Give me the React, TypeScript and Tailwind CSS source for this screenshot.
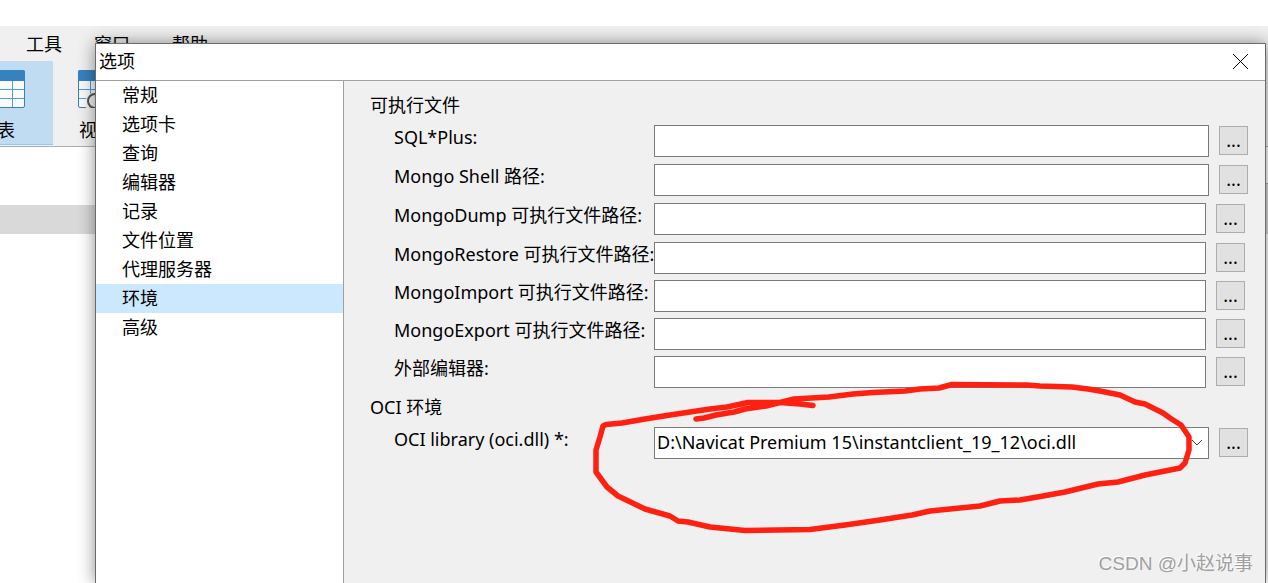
import { useState } from "react";

interface PathField {
  id: string;
  label: string;
  rowClass: string;
}

const categories = [
  "常规",
  "选项卡",
  "查询",
  "编辑器",
  "记录",
  "文件位置",
  "代理服务器",
  "环境",
  "高级",
];

const pathFields: PathField[] = [
  { id: "sqlplus", label: "SQL*Plus:", rowClass: "mb-[7px] pr-[17px]" },
  { id: "mongoShell", label: "Mongo Shell 路径:", rowClass: "mb-[7px] pr-[17px]" },
  { id: "mongoDump", label: "MongoDump 可执行文件路径:", rowClass: "mb-[7px] pr-5" },
  { id: "mongoRestore", label: "MongoRestore 可执行文件路径:", rowClass: "mb-1.5 pr-5" },
  { id: "mongoImport", label: "MongoImport 可执行文件路径:", rowClass: "mb-1.5 pr-5" },
  { id: "mongoExport", label: "MongoExport 可执行文件路径:", rowClass: "mb-1.5 pr-5" },
  { id: "editor", label: "外部编辑器:", rowClass: "pr-5" },
];

const ociPath = "D:\\Navicat Premium 15\\instantclient_19_12\\oci.dll";

const BrowseButton = ({ label }: { label: string }) => (
  <button
    aria-label={label}
    className="ml-2.5 mt-px flex h-[29px] w-[29px] shrink-0 items-center justify-center border border-[#adadad] bg-[#e1e1e1] pb-0.5"
  >
    ...
  </button>
);

const TableIcon = () => (
  <svg width="38" height="38" viewBox="0 0 38 38" fill="none">
    <rect x="0.5" y="0.5" width="37" height="37" rx="1.5" fill="#fafafa" stroke="#3682be" />
    <path d="M0 11V2Q0 0 2 0H36Q38 0 38 2V11Z" fill="#3682be" />
    <path d="M1 19.5H37M1 28.5H37M12.5 11V37M25.5 11V37" stroke="#4a9fe0" />
  </svg>
);

const ViewIcon = () => (
  <svg width="38" height="38" viewBox="0 0 38 38" fill="none">
    <rect x="0.5" y="0.5" width="37" height="37" rx="1.5" fill="#fafafa" stroke="#3682be" />
    <path d="M0 11V2Q0 0 2 0H36Q38 0 38 2V11Z" fill="#3682be" />
    <path d="M1 19.5H37M1 28.5H37M12.5 11V37M25.5 11V37" stroke="#4a9fe0" />
    <path d="M8 39V29Q11 22 18 22H38V39Z" fill="#f0f0f0" />
    <circle cx="17" cy="31" r="7" stroke="#555" strokeWidth="2" />
  </svg>
);

// The Navicat main window that sits behind the dialog
const MainWindow = () => (
  <div className="pt-[26px]">
    <div className="bg-[#f0f0f0]">
      <nav className="flex h-[35px] items-center gap-8 pl-[26px]">
        <button>工具</button>
        <button>窗口</button>
        <button className="ml-2.5">帮助</button>
      </nav>
      <div className="flex h-[86px] border-b border-[#adadad]">
        <button className="flex h-[84px] w-[53px] flex-col items-end border-b border-[#90c8f6] bg-[#c0dcf3] pr-7 pt-[9px]">
          <TableIcon />
          <span className="mr-2.5 mt-2.5">表</span>
        </button>
        <button className="ml-[25px] flex flex-col items-center pt-[9px]">
          <ViewIcon />
          <span className="mt-2.5">视图</span>
        </button>
      </div>
    </div>
    <div className="flex h-[58px] items-end justify-end">
      <div className="h-[22px] w-2 border-t border-[#adadad] bg-[#d9d9d9]" />
    </div>
    <div className="h-[29px] bg-[#d9d9d9]" />
  </div>
);

const App = () => {
  const [selected, setSelected] = useState("环境");

  return (
    <div className="relative min-h-screen overflow-hidden bg-white font-['Noto_Sans','Noto_Sans_CJK_SC',sans-serif] text-[18px] leading-6 text-black">
      <MainWindow />

      {/* Options dialog */}
      <div className="absolute bottom-0 left-[95px] right-0.5 top-[43px] flex flex-col border border-b-0 border-[#6b6b6b] bg-[#f0f0f0] shadow-[0_0_16px_rgba(0,0,0,0.45)]">
        <header className="flex h-[37px] shrink-0 items-center justify-between border-b border-[#a0a0a0] bg-white pb-0.5 pl-[3px] pr-4">
          <h1>选项</h1>
          <button aria-label="关闭">
            <svg width="17" height="17" viewBox="0 0 17 17" stroke="#000">
              <path d="M1 1L16 16M16 1L1 16" />
            </svg>
          </button>
        </header>

        <div className="flex flex-1">
          <nav className="w-[248px] shrink-0 border-r border-[#a0a0a0] bg-white">
            {categories.map((category) => (
              <button
                key={category}
                onClick={() => setSelected(category)}
                className={`block h-[29px] w-full pb-0.5 pl-[26px] text-left ${
                  selected === category ? "bg-[#cce8ff]" : ""
                }`}
              >
                {category}
              </button>
            ))}
          </nav>

          <main className="min-w-0 flex-1 pl-[26px] pt-3">
            <h2>可执行文件</h2>
            <div className="mt-2 pl-6">
              {pathFields.map((field) => (
                <div key={field.id} className={`flex h-8 items-start ${field.rowClass}`}>
                  <label
                    htmlFor={field.id}
                    className="w-[260px] shrink-0 overflow-hidden whitespace-nowrap"
                  >
                    {field.label}
                  </label>
                  <input
                    id={field.id}
                    type="text"
                    className="h-8 min-w-0 flex-1 border border-[#7a7a7a] bg-white px-0.5"
                  />
                  <BrowseButton label={`浏览 ${field.label}`} />
                </div>
              ))}
            </div>

            <h2 className="mt-[7px]">OCI 环境</h2>
            <div className="mt-2 flex h-8 items-start pl-6 pr-[17px]">
              <label htmlFor="oci" className="w-[260px] shrink-0">
                OCI library (oci.dll) *:
              </label>
              <div className="relative min-w-0 flex-1">
                <select
                  id="oci"
                  className="h-8 w-full appearance-none border border-[#7a7a7a] bg-white px-0.5 pb-0.5"
                >
                  <option>{ociPath}</option>
                </select>
                <svg
                  className="pointer-events-none absolute right-1.5 top-3"
                  width="12"
                  height="8"
                  viewBox="0 0 12 8"
                  fill="none"
                  stroke="#444"
                >
                  <path d="M1 1L6 6L11 1" />
                </svg>
              </div>
              <BrowseButton label="浏览 OCI library" />
            </div>
          </main>
        </div>
      </div>

      {/* Hand drawn marker around the OCI library path */}
      <svg
        className="pointer-events-none absolute left-[590px] top-[375px]"
        width="610"
        height="165"
        viewBox="590 375 610 165"
        fill="none"
        stroke="#ff2012"
        strokeWidth="5.5"
        strokeLinecap="round"
        strokeLinejoin="round"
      >
        <path d="M696 419L704 418L716 415L734 412L745 409L766 406L794 399L829 397L853 394L873 392.500L905 391L920 389L939 388L952 384.500L1027 385L1040 386L1072 387L1088 389L1100 391L1120 395L1135 402L1145 404L1163 413L1170 418L1181 425L1189 437V450L1185 463L1180 468L1145 475L1118 482L1098 484L1065 492L1043 496L1020 500L1000 501L980 506L960 508L930 511L912 515L880 520L845 525L810 529.500L745 530.500L710 527L688 522L678 521L670 516L645 509L618 496L607 487L596 472V450L600 437L603 426L606 424.500L622 423L645 419L670 415L710 409L727 407L748 402.500H780L800 404L813 405.500" />
      </svg>

      <p className="absolute bottom-[7px] right-[15px] font-['Liberation_Sans','Noto_Sans_CJK_SC',sans-serif] text-[19px] text-[#a0a0a0] [text-shadow:-1px_-1px_0_#fff]">
        CSDN @小赵说事
      </p>
    </div>
  );
};

export default App;
